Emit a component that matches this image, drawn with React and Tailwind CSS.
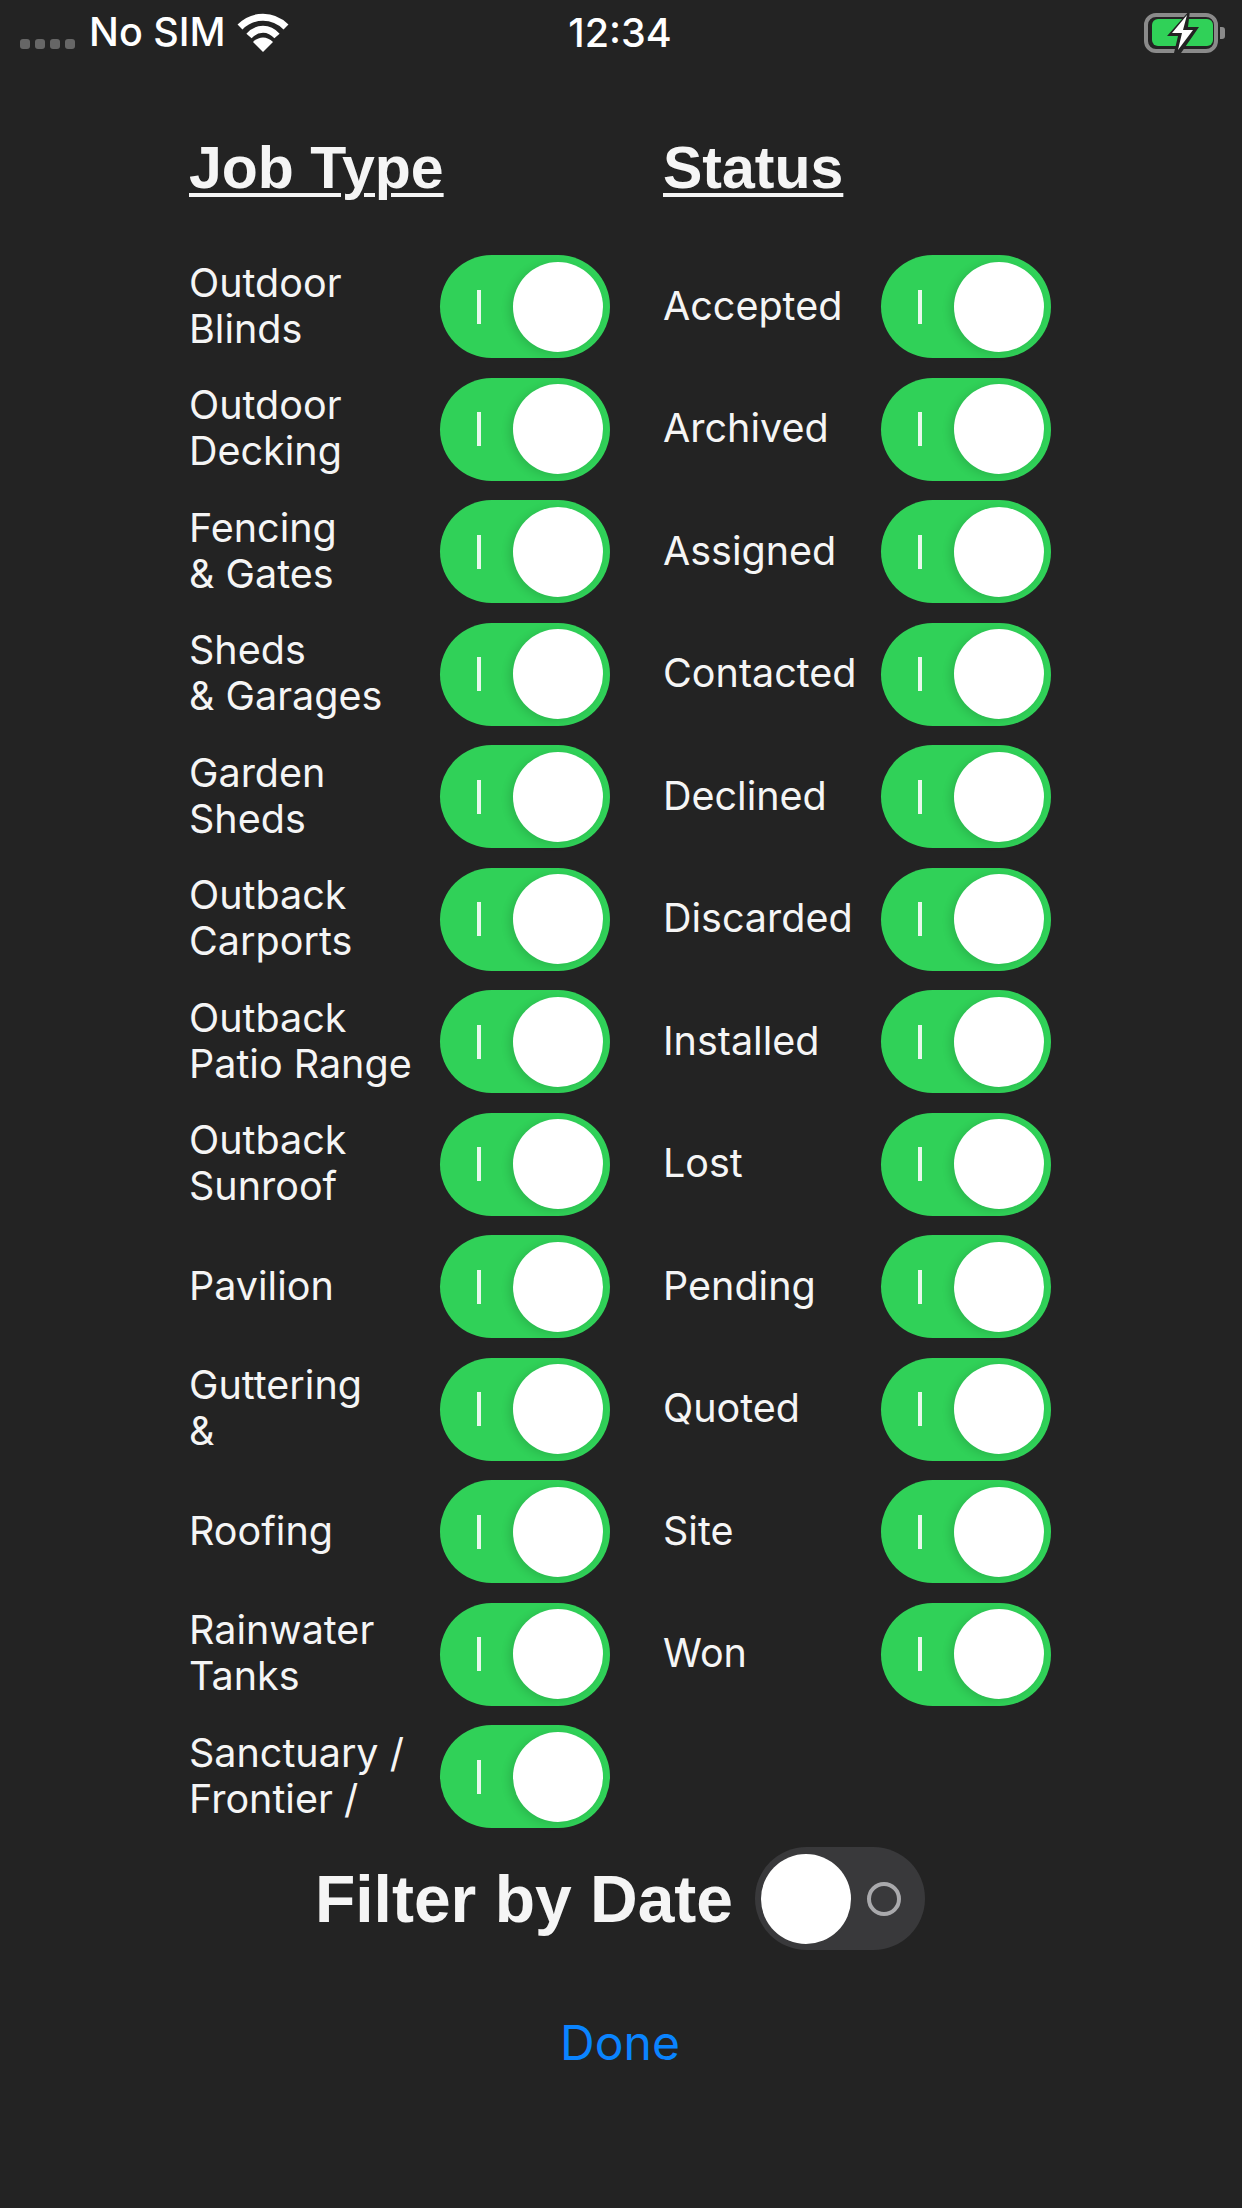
const sans = "font-['Inter','Noto_Sans',sans-serif]";
const heading = "font-['Liberation_Sans',Arial,sans-serif]";

const jobTypes = [
  ["Outdoor", "Blinds"],
  ["Outdoor", "Decking"],
  ["Fencing", "& Gates"],
  ["Sheds", "& Garages"],
  ["Garden", "Sheds"],
  ["Outback", "Carports"],
  ["Outback", "Patio Range"],
  ["Outback", "Sunroof"],
  ["Pavilion"],
  ["Guttering", "&"],
  ["Roofing"],
  ["Rainwater", "Tanks"],
  ["Sanctuary /", "Frontier /"],
];

const statuses = [
  "Accepted",
  "Archived",
  "Assigned",
  "Contacted",
  "Declined",
  "Discarded",
  "Installed",
  "Lost",
  "Pending",
  "Quoted",
  "Site",
  "Won",
];

function ToggleOn() {
  return (
    <div className="flex items-center justify-between w-[170px] h-[103px] shrink-0 rounded-full bg-[#30d158] pl-[37px] pr-[7px]">
      <span className="w-[4px] h-[34px] bg-[#e8f8ec]"></span>
      <span className="w-[90px] h-[90px] rounded-full bg-white shadow-[-4px_2px_8px_rgba(0,0,0,0.12)]"></span>
    </div>
  );
}

function ToggleOff() {
  return (
    <div className="flex items-center justify-between w-[170px] h-[103px] shrink-0 rounded-full bg-[#39393b] pl-[6px] pr-[24px]">
      <span className="w-[90px] h-[90px] rounded-full bg-white"></span>
      <span className="w-[34px] h-[34px] rounded-full border-[4px] border-[#a9a9ac]"></span>
    </div>
  );
}

function Row({ lines, labelWidth }) {
  return (
    <div className="flex items-center h-[103px]">
      <div className={`${labelWidth} pb-[1.5px] text-[39.5px] leading-[46px] text-[#f5f5f5] whitespace-nowrap`}>
        {lines.map((line) => (
          <div key={line}>{line}</div>
        ))}
      </div>
      <ToggleOn />
    </div>
  );
}

function StatusBar() {
  return (
    <div className="flex items-center justify-between h-[66px] pl-[20px] pr-[16px] text-white">
      <div className="flex items-center w-[417px]">
        <div className="flex gap-[5px] mt-[22px]">
          <span className="w-[10px] h-[10px] rounded-[3px] bg-[#666666]"></span>
          <span className="w-[10px] h-[10px] rounded-[3px] bg-[#666666]"></span>
          <span className="w-[10px] h-[10px] rounded-[3px] bg-[#666666]"></span>
          <span className="w-[10px] h-[10px] rounded-[3px] bg-[#666666]"></span>
        </div>
        <span className="ml-[14px] text-[39.5px] font-medium leading-none">No SIM</span>
        <svg className="ml-[11px]" width="52" height="40" viewBox="0 0 52 40" fill="none">
          <path d="M3 14 C16 1 36 1 49 14" stroke="white" strokeWidth="7" />
          <path d="M12 23 C20 14 32 14 40 23" stroke="white" strokeWidth="7" />
          <path d="M26 39 L16 29 C22 23 30 23 36 29 Z" fill="white" />
        </svg>
      </div>
      <span className="mt-[1px] text-[39.5px] font-medium leading-none">12:34</span>
      <div className="flex items-center justify-end w-[423px]">
        <svg width="82" height="40" viewBox="0 0 82 40" fill="none">
          <rect x="2" y="2" width="70" height="36" rx="10" stroke="#8a8a8a" strokeWidth="4" />
          <rect x="8" y="6" width="61" height="27" rx="6" fill="#30d158" />
          <path d="M76 14 h2 a3 3 0 0 1 3 3 v6 a3 3 0 0 1 -3 3 h-2 Z" fill="#8a8a8a" />
          <path d="M46 -3 L23 23 H34 L30 40 L37 40 L55 14 H44 Z" fill="#232323" />
          <path d="M43 2 L28 20 H38 L34 37 L49 17 H39 Z" fill="white" />
        </svg>
      </div>
    </div>
  );
}

export default function App() {
  return (
    <div className={`${sans} w-[1242px] h-[2208px] bg-[#232323]`}>
      <StatusBar />

      <div className="flex pl-[189px] pt-[67px]">
        <div className="w-[474px]">
          <h2 className={`${heading} h-[70px] text-[59px] leading-[70px] font-bold text-[#f5f5f5] underline underline-offset-[5px] decoration-[4px]`}>Job Type</h2>
          <div className="flex flex-col gap-[19.5px] mt-[52px]">
            {jobTypes.map((lines) => (
              <Row key={lines.join(" ")} lines={lines} labelWidth="w-[251px]" />
            ))}
          </div>
        </div>
        <div>
          <h2 className={`${heading} h-[70px] text-[59px] leading-[70px] font-bold text-[#f5f5f5] underline underline-offset-[5px] decoration-[4px]`}>Status</h2>
          <div className="flex flex-col gap-[19.5px] mt-[52px]">
            {statuses.map((name) => (
              <Row key={name} lines={[name]} labelWidth="w-[218px]" />
            ))}
          </div>
        </div>
      </div>

      <div className="flex items-center justify-center gap-[22px] mt-[19px] pr-[2px]">
        <span className={`${heading} text-[66px] leading-[78px] font-bold text-[#f5f5f5]`}>Filter by Date</span>
        <ToggleOff />
      </div>

      <div className="text-center mt-[65px] text-[48px] leading-[56px] text-[#0a84ff] pr-[2px]">Done</div>
    </div>
  );
}
